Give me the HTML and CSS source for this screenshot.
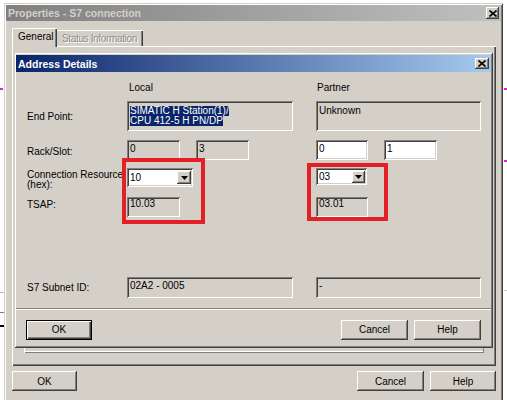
FILE: index.html
```
<!DOCTYPE html>
<html>
<head>
<meta charset="utf-8">
<title>Properties - S7 connection</title>
<link rel="stylesheet" href="styles.css">
</head>
<body>
<div class="desktop">
  <span class="deco mag mag-l"></span>
  <span class="deco mag mag-r1"></span>
  <span class="deco mag mag-r2"></span>
  <span class="deco bg-l1"></span>
  <span class="deco bg-l2"></span>
  <span class="deco bg-l3"></span>
  <span class="deco bg-r1"></span>

  <div class="window">
    <div class="titlebar inactive">
      <span class="title">Properties - S7 connection</span>
      <span class="close close-outer"><svg width="8" height="7" viewBox="0 0 8 7"><path d="M0.5 0.5L7.5 6.5M7.5 0.5L0.5 6.5" stroke="#000" stroke-width="1.6" fill="none"/></svg></span>
    </div>

    <div class="tabs">
      <div class="tab tab-active">General</div>
      <div class="tab tab-disabled">Status Information</div>
    </div>

    <div class="tabpanel">
      <div class="dialog">
        <div class="titlebar active">
          <span class="title">Address Details</span>
          <span class="close close-inner"><svg width="8" height="7" viewBox="0 0 8 7"><path d="M0.5 0.5L7.5 6.5M7.5 0.5L0.5 6.5" stroke="#000" stroke-width="1.6" fill="none"/></svg></span>
        </div>

        <div class="form">
          <div class="row row-head">
            <div class="lbl"></div>
            <div class="loc head">Local</div>
            <div class="par head head-par">Partner</div>
          </div>

          <div class="row row-ep">
            <div class="lbl">End Point:</div>
            <div class="loc">
              <div class="field multi w166"><span class="sel">SIMATIC H Station(1)/</span><span class="sel">CPU 412-5 H PN/DP</span></div>
            </div>
            <div class="par">
              <div class="field multi w165">Unknown</div>
            </div>
          </div>

          <div class="row row-rack">
            <div class="lbl lbl-rack">Rack/Slot:</div>
            <div class="loc">
              <div class="field w53">0</div>
              <div class="field w53">3</div>
            </div>
            <div class="par">
              <div class="field white w52">0</div>
              <div class="field white w53">1</div>
            </div>
          </div>

          <div class="row row-conn">
            <div class="lbl lbl-conn">Connection Resource<br>(hex):</div>
            <div class="loc">
              <div class="combo combo-local"><span class="val">10</span><span class="drop"><svg width="7" height="4" viewBox="0 0 7 4"><path d="M0 0H7L3.5 4Z" fill="#000"/></svg></span></div>
            </div>
            <div class="par">
              <div class="combo combo-par"><span class="val">03</span><span class="drop"><svg width="7" height="4" viewBox="0 0 7 4"><path d="M0 0H7L3.5 4Z" fill="#000"/></svg></span></div>
            </div>
          </div>

          <div class="row row-tsap">
            <div class="lbl lbl-tsap">TSAP:</div>
            <div class="loc">
              <div class="field top w53">10.03</div>
            </div>
            <div class="par">
              <div class="field top w52">03.01</div>
            </div>
          </div>

          <div class="row row-sub">
            <div class="lbl">S7 Subnet ID:</div>
            <div class="loc">
              <div class="field h21 w166">02A2 - 0005</div>
            </div>
            <div class="par">
              <div class="field h21 w165">-</div>
            </div>
          </div>
        </div>

        <div class="sep"></div>

        <div class="btnrow btnrow-inner">
          <button class="btn btn-default w66">OK</button>
          <span class="spacer"></span>
          <button class="btn w67">Cancel</button>
          <button class="btn w67">Help</button>
        </div>
      </div>
      <div class="under"></div>
    </div>

    <div class="btnrow btnrow-outer">
      <button class="btn w65">OK</button>
      <span class="spacer"></span>
      <button class="btn w67">Cancel</button>
      <button class="btn w66">Help</button>
    </div>
  </div>

  <div class="redbox rb-local"></div>
  <div class="redbox rb-partner"></div>
</div>
</body>
</html>
```

FILE: styles.css
```
* { box-sizing: border-box; }

html, body {
  margin: 0;
  padding: 0;
}

body {
  width: 507px;
  height: 400px;
  overflow: hidden;
  background: #ffffff;
  font-family: "Liberation Sans", Arial, sans-serif;
  font-size: 10px;
  color: #000;
}

.desktop {
  position: relative;
  width: 507px;
  height: 400px;
  overflow: hidden;
  padding: 3px 0 0 4px;
}

/* background decorations outside the window */
.deco { position: absolute; display: block; }
.mag { height: 2px; background: #e020d8; }
.mag-l { left: 0; top: 88px; width: 3px; }
.mag-r1 { left: 504px; top: 88px; width: 3px; }
.mag-r2 { left: 504px; top: 160px; width: 3px; }
.bg-l1 { left: 0; top: 292px; width: 4px; height: 1px; background: #b8b8b8; }
.bg-l2 { left: 0; top: 312px; width: 4px; height: 1px; background: #808080; }
.bg-l3 { left: 0; top: 325px; width: 4px; height: 2px; background: #000; }
.bg-r1 { left: 504px; top: 290px; width: 3px; height: 1px; background: #c8c8c8; }

/* window frame */
.window {
  width: 499px;
  height: 402px;
  background: #d4d0c8;
  padding: 2px;
  box-shadow: inset 1px 1px 0 #d4d0c8, inset -1px -1px 0 #404040, inset 2px 2px 0 #ffffff, inset -2px -2px 0 #808080;
}

.titlebar {
  display: flex;
  align-items: center;
  height: 16px;
  padding-left: 2px;
}
.titlebar.inactive {
  background: linear-gradient(to right, #808080, #c0c0c0);
  color: #d4d0c8;
}
.titlebar.active {
  height: 17px;
  background: linear-gradient(to right, #0a246a, #a6caf0);
  color: #ffffff;
}
.title {
  flex: 1;
  font-weight: bold;
  font-size: 10.5px;
  white-space: nowrap;
}

.close {
  display: flex;
  align-items: center;
  justify-content: center;
  background: #d4d0c8;
  box-shadow: inset -1px -1px 0 #404040, inset 1px 1px 0 #ffffff, inset -2px -2px 0 #808080;
}
.close-outer { width: 13px; height: 12px; margin-right: 2px; }
.close-inner { width: 14px; height: 11px; margin-right: 2px; }

/* tabs */
.tabs {
  display: flex;
  align-items: flex-end;
  height: 25px;
  padding-left: 6px;
}
.tab {
  white-space: nowrap;
  background: #d4d0c8;
}
.tab-active {
  position: relative;
  z-index: 2;
  width: 45px;
  height: 19px;
  margin-bottom: -1px;
  padding-left: 6px;
  line-height: 18px;
  box-shadow: inset 1px 1px 0 #ffffff, inset -1px 0 0 #404040, inset -2px 0 0 #808080;
}
.tab-disabled {
  width: 86px;
  height: 16px;
  padding: 1px 0 0 5px;
  line-height: 15px;
  color: #8c8c8c;
  text-shadow: 1px 1px 0 #ffffff;
  letter-spacing: -0.35px;
  box-shadow: inset 0 1px 0 #ffffff, inset -1px 0 0 #404040, inset -2px 0 0 #808080;
}

.tabpanel {
  margin-left: 6px;
  width: 484px;
  height: 320px;
  padding: 2px;
  box-shadow: inset 1px 1px 0 #ffffff, inset -1px -1px 0 #404040, inset -2px -2px 0 #808080;
}

/* inner dialog */
.dialog {
  margin-top: 4px;
  width: 479px;
  height: 296px;
  padding: 3px 2px 2px 2px;
  background: #d4d0c8;
  box-shadow: inset 1px 1px 0 #d4d0c8, inset -1px -1px 0 #404040, inset 2px 2px 0 #ffffff, inset -2px -2px 0 #808080;
}

.form {
  padding: 9px 0 0 11px;
}
.row { display: flex; }
.row-head { height: 14px; line-height: 14px; }
.row-ep { margin-top: 6px; }
.row-rack { margin-top: 9px; }
.row-conn { margin-top: 8px; }
.row-tsap { margin-top: 6px; }
.row-sub { margin-top: 60px; }

.lbl {
  flex: none;
  width: 100px;
  align-self: center;
  white-space: nowrap;
}
.lbl-rack { padding-top: 3px; }
.lbl-conn { align-self: flex-start; line-height: 10.5px; padding-top: 1.5px; }
.lbl-tsap { padding-bottom: 5px; }

.loc {
  flex: none;
  width: 189px;
  display: flex;
  gap: 16px;
}
.par {
  display: flex;
  gap: 16px;
}
.head { padding-left: 2px; }
.head-par { padding-left: 1px; }

.field {
  height: 20px;
  padding: 2px 3px 0 3px;
  line-height: 14px;
  white-space: nowrap;
  background: #d4d0c8;
  box-shadow: inset 1px 1px 0 #808080, inset -1px -1px 0 #ffffff, inset 2px 2px 0 #404040, inset -2px -2px 0 #d4d0c8;
}
.field.white { background: #ffffff; }
.field.top { padding-top: 0; }
.field.h21 { height: 21px; }
.field.multi {
  height: 30px;
  padding-top: 5px;
  line-height: 10px;
}
.sel {
  display: block;
  width: fit-content;
  height: 10px;
  background: #0a246a;
  color: #ffffff;
}

.w52 { width: 52px; }
.w53 { width: 53px; }
.w65 { width: 65px; }
.w66 { width: 66px; }
.w67 { width: 67px; }
.w165 { width: 165px; }
.w166 { width: 166px; }

.combo {
  display: flex;
  align-items: center;
  padding: 2px;
  background: #ffffff;
  box-shadow: inset 1px 1px 0 #808080, inset -1px -1px 0 #ffffff, inset 2px 2px 0 #404040, inset -2px -2px 0 #d4d0c8;
}
.combo .val { flex: 1; padding-left: 1px; }
.combo-local { width: 66px; height: 19px; }
.combo-par { width: 51px; height: 17px; }
.drop {
  display: flex;
  align-items: center;
  justify-content: center;
  width: 14px;
  height: 13px;
  background: #d4d0c8;
  box-shadow: inset -1px -1px 0 #404040, inset 1px 1px 0 #ffffff, inset -2px -2px 0 #808080;
}
.combo-par .drop { width: 13px; height: 12px; }

.sep {
  margin-top: 10px;
  height: 2px;
  border-top: 1px solid #808080;
  border-bottom: 1px solid #ffffff;
}

.btnrow { display: flex; }
.btnrow-inner { margin-top: 10px; padding: 0 10px; gap: 6px; }
.btnrow-outer { margin-top: 5px; padding: 0 5px 0 6px; gap: 6px; }
.spacer { flex: 1; }

.btn {
  height: 20px;
  padding: 0;
  border: none;
  margin: 0;
  font-family: "Liberation Sans", Arial, sans-serif;
  font-size: 10px;
  color: #000;
  background: #d4d0c8;
  box-shadow: inset -1px -1px 0 #404040, inset 1px 1px 0 #ffffff, inset -2px -2px 0 #808080;
}
.btn-default {
  box-shadow: inset 0 0 0 1px #000000, inset 2px 2px 0 #ffffff, inset -2px -2px 0 #404040, inset -3px -3px 0 #808080;
}

.under {
  margin-left: 10px;
  width: 460px;
  height: 5px;
  box-shadow: inset 1px 0 0 #ffffff, inset -1px -1px 0 #808080, inset 0 -2px 0 #ffffff;
}

/* annotation rectangles drawn over the form */
.redbox {
  position: absolute;
  border: 4px solid #e61e25;
}
.rb-local { left: 122px; top: 158px; width: 83px; height: 66px; }
.rb-partner { left: 307px; top: 163px; width: 81px; height: 58px; }
```
